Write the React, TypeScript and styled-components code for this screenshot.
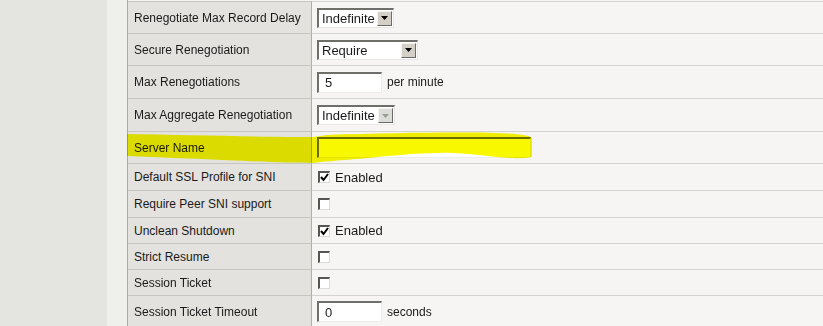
import { FC } from 'react';
import styled, { createGlobalStyle } from 'styled-components';

const GlobalStyle = createGlobalStyle`
  html, body {
    margin: 0;
    padding: 0;
    background: #f6f5f3;
    overflow: hidden;
  }
  body {
    font-family: Tahoma, "Liberation Sans", Arial, sans-serif;
    font-size: 12px;
    color: #1a1a1a;
  }
`;

const Page = styled.div`
  display: flex;
  width: 823px;
  height: 326px;
  overflow: hidden;
`;

const Nav = styled.div`
  width: 107px;
  flex: none;
  background: #e4e4e0;
`;

const Gutter = styled.div`
  width: 20px;
  flex: none;
  background: #efefeb;
`;

const Content = styled.div`
  flex: 1;
  padding-top: 1px;
  border-left: 1px solid #a9a9a5;
  background: #f6f5f3;
`;

const Row = styled.div<{ $h: number }>`
  position: relative;
  display: grid;
  grid-template-columns: 184px 1fr;
  height: ${(p) => p.$h}px;
  border-top: 1px solid #d3d2ce;
  box-sizing: border-box;
`;

const Label = styled.div`
  display: flex;
  align-items: center;
  padding-left: 6px;
  background: #e3e2de;
  border-right: 1px solid #aeaeaa;
  border-top: 1px solid #c6c5c1;
  margin-top: -1px;
  white-space: nowrap;
`;

const Value = styled.div`
  display: flex;
  align-items: center;
  gap: 4px;
  padding-left: 5px;
`;

const SelectBox = styled.div<{ $w: number }>`
  display: flex;
  align-items: center;
  justify-content: space-between;
  width: ${(p) => p.$w}px;
  height: 20px;
  box-sizing: border-box;
  background: #fff;
  border-top: 2px solid #6e6e6a;
  border-left: 2px solid #6e6e6a;
  border-bottom: 1px solid #e8e8e4;
  border-right: 1px solid #e8e8e4;
  padding-left: 3px;
  font-size: 13px;
`;

const Arrow = styled.div<{ $off?: boolean }>`
  width: 15px;
  height: 15px;
  margin-right: 1px;
  display: flex;
  align-items: center;
  justify-content: center;
  background: ${(p) => (p.$off ? '#dcdcd8' : '#d4d0c8')};
  border-top: 1px solid #f4f4f0;
  border-left: 1px solid #f4f4f0;
  border-bottom: 1px solid #6a6a66;
  border-right: 1px solid #6a6a66;
  box-sizing: border-box;
`;

const TextBox = styled.div<{ $w: number }>`
  width: ${(p) => p.$w}px;
  height: 21px;
  box-sizing: border-box;
  background: #fff;
  border-top: 2px solid #6e6e6a;
  border-left: 2px solid #6e6e6a;
  border-bottom: 1px solid #ecece8;
  border-right: 1px solid #ecece8;
  padding-left: 6px;
  display: flex;
  align-items: center;
  font-size: 13px;
`;

const Unit = styled.span`
  font-size: 12px;
  padding-left: 1px;
`;

const Check = styled.div`
  width: 12px;
  height: 12px;
  box-sizing: border-box;
  background: #fff;
  border-top: 2px solid #555552;
  border-left: 2px solid #555552;
  border-bottom: 1px solid #dcdcd8;
  border-right: 1px solid #dcdcd8;
  margin-left: 1px;
  display: flex;
  align-items: center;
  justify-content: center;
`;

const CheckLabel = styled.span`
  font-size: 13px;
  padding-left: 1px;
`;

const Highlight = styled.svg`
  position: absolute;
  left: -1px;
  top: 0;
  pointer-events: none;
  mix-blend-mode: multiply;
`;

const Tri: FC<{ off?: boolean }> = ({ off }) => (
  <svg width="7" height="4" viewBox="0 0 7 4">
    <path d="M0 0 H7 L3.5 4 Z" fill={off ? '#9a9a96' : '#000'} />
  </svg>
);

const Select: FC<{ text: string; w: number; off?: boolean }> = ({ text, w, off }) => (
  <SelectBox $w={w}>
    <span>{text}</span>
    <Arrow $off={off}>
      <Tri off={off} />
    </Arrow>
  </SelectBox>
);

const Box: FC<{ on?: boolean; text?: string }> = ({ on, text }) => (
  <>
    <Check>
      {on && (
        <svg width="9" height="9" viewBox="0 0 9 9">
          <path d="M1 4 L3.5 7 L8 1" stroke="#000" strokeWidth="2" fill="none" />
        </svg>
      )}
    </Check>
    {text && <CheckLabel>{text}</CheckLabel>}
  </>
);

const App: FC = () => (
  <>
    <GlobalStyle />
    <Page>
      <Nav />
      <Gutter />
      <Content>
        <Row $h={32}>
          <Label>Renegotiate Max Record Delay</Label>
          <Value>
            <Select text="Indefinite" w={77} />
          </Value>
        </Row>
        <Row $h={32}>
          <Label>Secure Renegotiation</Label>
          <Value>
            <Select text="Require" w={101} />
          </Value>
        </Row>
        <Row $h={33}>
          <Label>Max Renegotiations</Label>
          <Value>
            <TextBox $w={65}>5</TextBox>
            <Unit>per minute</Unit>
          </Value>
        </Row>
        <Row $h={33}>
          <Label>Max Aggregate Renegotiation</Label>
          <Value>
            <Select text="Indefinite" w={78} off />
          </Value>
        </Row>
        <Row $h={32}>
          <Label>Server Name</Label>
          <Value>
            <TextBox $w={214} />
          </Value>
          <Highlight width="410" height="32" viewBox="0 0 410 32">
            <path
              d="M0 2 C60 3 140 5 186 5 L200 3 C260 1 330 0 370 1 C392 2 402 3 405 6 L405 25 C395 27 380 26 370 25 C350 23 330 20 312 21 C290 21 260 24 230 27 C205 29 192 30 186 31 C150 31 80 27 0 24 Z"
              fill="#f8f800"
            />
          </Highlight>
        </Row>
        <Row $h={27}>
          <Label>Default SSL Profile for SNI</Label>
          <Value>
            <Box on text="Enabled" />
          </Value>
        </Row>
        <Row $h={27}>
          <Label>Require Peer SNI support</Label>
          <Value>
            <Box />
          </Value>
        </Row>
        <Row $h={26}>
          <Label>Unclean Shutdown</Label>
          <Value>
            <Box on text="Enabled" />
          </Value>
        </Row>
        <Row $h={26}>
          <Label>Strict Resume</Label>
          <Value>
            <Box />
          </Value>
        </Row>
        <Row $h={26}>
          <Label>Session Ticket</Label>
          <Value>
            <Box />
          </Value>
        </Row>
        <Row $h={32}>
          <Label>Session Ticket Timeout</Label>
          <Value>
            <TextBox $w={65}>0</TextBox>
            <Unit>seconds</Unit>
          </Value>
        </Row>
      </Content>
    </Page>
  </>
);

export default App;
